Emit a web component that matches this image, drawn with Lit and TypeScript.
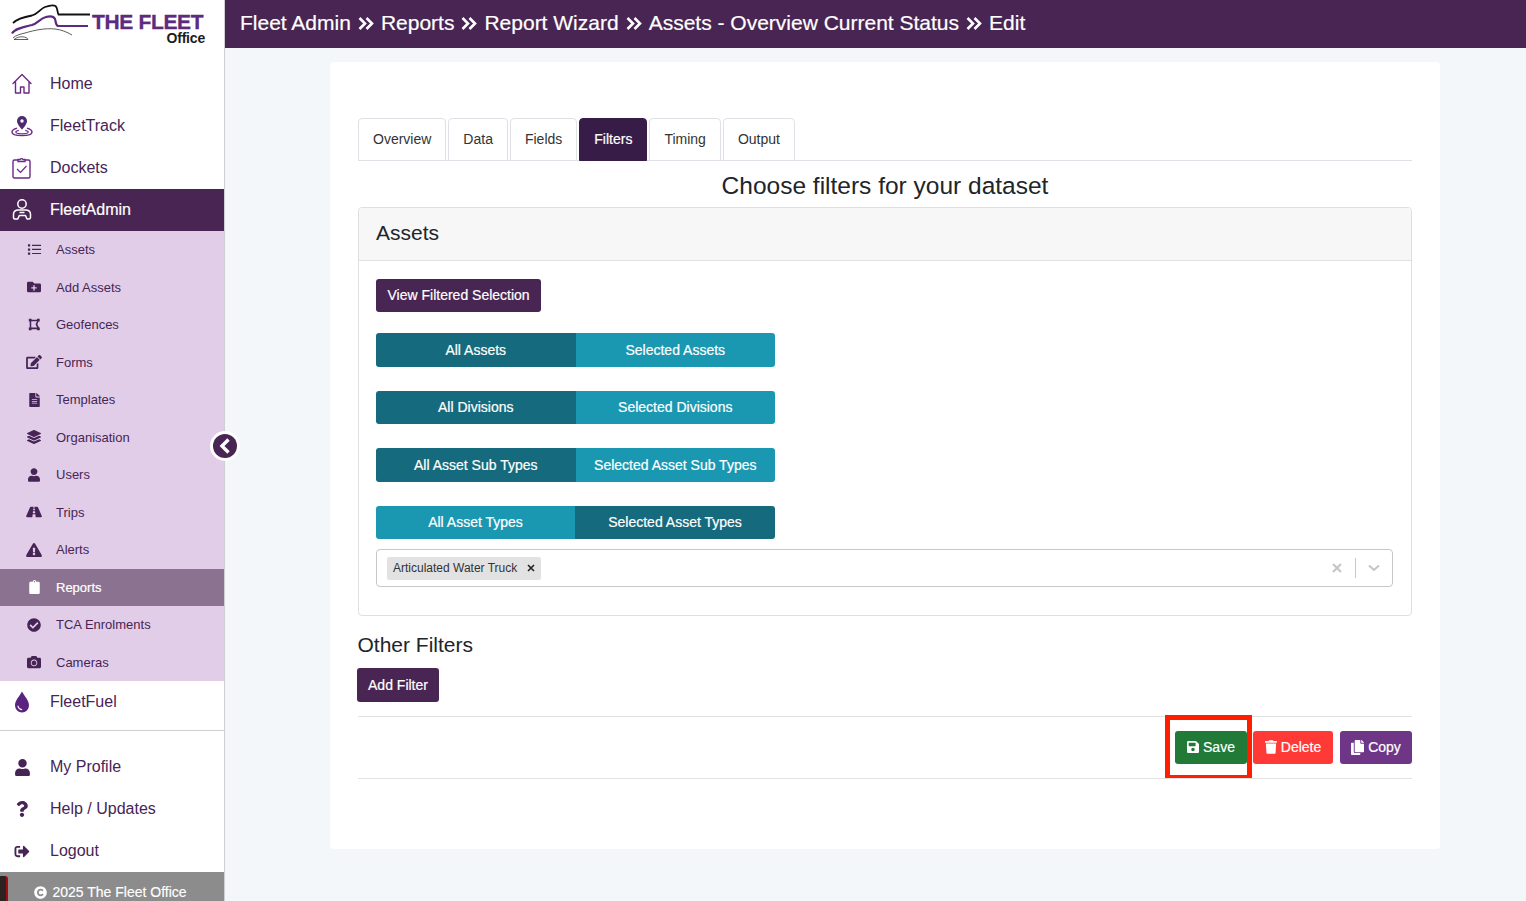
import { LitElement, html, css, svg } from "lit";
import { customElement } from "lit/decorators.js";

type Ic = { vb: string; d: string };
const I: Record<string, Ic> = {
  user: { vb: "0 0 448 512", d: "M224 256c70.7 0 128-57.3 128-128S294.7 0 224 0 96 57.3 96 128s57.3 128 128 128zm89.6 32h-16.7c-22.2 10.2-46.9 16-72.9 16s-50.6-5.8-72.9-16h-16.7C60.2 288 0 348.2 0 422.4V464c0 26.5 21.5 48 48 48h352c26.5 0 48-21.5 48-48v-41.6c0-74.2-60.2-134.4-134.4-134.4z" },
  save: { vb: "0 0 448 512", d: "M433.941 129.941l-83.882-83.882A48 48 0 0 0 316.118 32H48C21.49 32 0 53.49 0 80v352c0 26.51 21.49 48 48 48h352c26.51 0 48-21.49 48-48V163.882a48 48 0 0 0-14.059-33.941zM224 416c-35.346 0-64-28.654-64-64 0-35.346 28.654-64 64-64s64 28.654 64 64c0 35.346-28.654 64-64 64zm96-304.52V212c0 6.627-5.373 12-12 12H76c-6.627 0-12-5.373-12-12V108c0-6.627 5.373-12 12-12h228.52c3.183 0 6.235 1.264 8.485 3.515l3.48 3.48A11.996 11.996 0 0 1 320 111.48z" },
  trash: { vb: "0 0 448 512", d: "M432 32H312l-9.4-18.7A24 24 0 0 0 281.1 0H166.8a23.72 23.72 0 0 0-21.4 13.3L136 32H16A16 16 0 0 0 0 48v32a16 16 0 0 0 16 16h416a16 16 0 0 0 16-16V48a16 16 0 0 0-16-16zM53.2 467a48 48 0 0 0 47.9 45h245.8a48 48 0 0 0 47.9-45L416 128H32z" },
  copy: { vb: "0 0 448 512", d: "M320 448v40c0 13.255-10.745 24-24 24H24c-13.255 0-24-10.745-24-24V120c0-13.255 10.745-24 24-24h72v296c0 30.879 25.121 56 56 56h168zm0-344V0H152c-13.255 0-24 10.745-24 24v368c0 13.255 10.745 24 24 24h272c13.255 0 24-10.745 24-24V128H344c-13.2 0-24-10.8-24-24zm120.971-31.029L375.029 7.029A24 24 0 0 0 358.059 0H352v96h96v-6.059a24 24 0 0 0-7.029-16.97z" },
  question: { vb: "0 0 384 512", d: "M202.021 0C122.202 0 70.503 32.703 29.914 91.026c-7.363 10.58-5.093 25.086 5.178 32.874l43.138 32.709c10.373 7.865 25.132 6.026 33.253-4.148 25.049-31.381 43.63-49.449 82.757-49.449 30.764 0 68.816 19.799 68.816 49.631 0 22.552-18.617 34.134-48.993 51.164-35.423 19.86-82.299 44.576-82.299 106.405V320c0 13.255 10.745 24 24 24h72.471c13.255 0 24-10.745 24-24v-5.773c0-42.86 125.268-44.645 125.268-160.627C377.504 66.256 286.902 0 202.021 0zM192 373.459c-38.196 0-69.271 31.075-69.271 69.271 0 38.195 31.075 69.27 69.271 69.27s69.271-31.075 69.271-69.271-31.075-69.27-69.271-69.27z" },
  check: { vb: "0 0 512 512", d: "M504 256c0 136.967-111.033 248-248 248S8 392.967 8 256 119.033 8 256 8s248 111.033 248 248zM227.314 387.314l184-184c6.248-6.248 6.248-16.379 0-22.627l-22.627-22.627c-6.248-6.249-16.379-6.249-22.628 0L216 308.118l-70.059-70.059c-6.248-6.248-16.379-6.248-22.628 0l-22.627 22.627c-6.248 6.248-6.248 16.379 0 22.627l104 104c6.249 6.249 16.379 6.249 22.628.001z" },
  camera: { vb: "0 0 512 512", d: "M512 144v288c0 26.5-21.5 48-48 48H48c-26.5 0-48-21.5-48-48V144c0-26.5 21.5-48 48-48h88l12.3-32.9c7-18.7 24.9-31.1 44.9-31.1h125.5c20 0 37.9 12.4 44.9 31.1L376 96h88c26.5 0 48 21.5 48 48zM376 288c0-66.2-53.8-120-120-120s-120 53.8-120 120 53.8 120 120 120 120-53.8 120-120zm-32 0c0 48.5-39.5 88-88 88s-88-39.5-88-88 39.5-88 88-88 88 39.5 88 88z" },
  clipboard: { vb: "0 0 384 512", d: "M384 112v352c0 26.51-21.49 48-48 48H48c-26.51 0-48-21.49-48-48V112c0-26.51 21.49-48 48-48h80c0-35.29 28.71-64 64-64s64 28.71 64 64h80c26.51 0 48 21.49 48 48zM192 40c-13.255 0-24 10.745-24 24s10.745 24 24 24 24-10.745 24-24-10.745-24-24-24" },
  warn: { vb: "0 0 576 512", d: "M569.517 440.013C587.975 472.007 564.806 512 527.94 512H48.054c-36.937 0-59.999-40.055-41.577-71.987L246.423 24c18.467-32.009 64.72-31.951 83.154 0l239.94 416.013zM288 354c-25.405 0-46 20.595-46 46s20.595 46 46 46 46-20.595 46-46-20.595-46-46-46zm-43.673-165.346l7.418 136c.347 6.364 5.609 11.346 11.982 11.346h48.546c6.373 0 11.635-4.982 11.982-11.346l7.418-136c.375-6.874-5.098-12.654-11.982-12.654h-63.383c-6.884 0-12.356 5.78-11.981 12.654z" },
  layers: { vb: "0 0 512 512", d: "M12.41 148.02l232.94 105.67c6.8 3.09 14.49 3.09 21.29 0l232.94-105.67c16.55-7.51 16.55-32.52 0-40.03L266.65 2.31a25.607 25.607 0 0 0-21.29 0L12.41 107.98c-16.55 7.51-16.55 32.53 0 40.04zm487.18 88.28l-58.09-26.33-161.64 73.27c-7.56 3.43-15.59 5.17-23.86 5.17s-16.29-1.74-23.86-5.17L70.51 209.97l-58.1 26.33c-16.55 7.5-16.55 32.5 0 40l232.94 105.59c6.8 3.08 14.49 3.08 21.29 0L499.59 276.3c16.55-7.5 16.55-32.5 0-40zm0 127.8l-57.87-26.23-161.86 73.37c-7.56 3.43-15.59 5.17-23.86 5.17s-16.29-1.74-23.86-5.17L70.29 337.87 12.41 364.1c-16.55 7.5-16.55 32.5 0 40l232.94 105.59c6.8 3.08 14.49 3.08 21.29 0L499.59 404.1c16.55-7.5 16.55-32.5 0-40z" },
  edit: { vb: "0 0 576 512", d: "M402.6 83.2l90.2 90.2c3.8 3.8 3.8 10 0 13.8L274.4 405.6l-92.8 10.3c-12.4 1.4-22.9-9.1-21.5-21.5l10.3-92.8L388.8 83.2c3.8-3.8 10-3.8 13.8 0zm162-22.9l-48.8-48.8c-15.2-15.2-39.9-15.2-55.2 0l-35.4 35.4c-3.8 3.8-3.8 10 0 13.8l90.2 90.2c3.8 3.8 10 3.8 13.8 0l35.4-35.4c15.2-15.3 15.2-40 0-55.2zM384 346.2V448H64V128h229.8c3.2 0 6.2-1.3 8.5-3.5l40-40c7.6-7.6 2.2-20.5-8.5-20.5H48C21.5 64 0 85.5 0 112v352c0 26.5 21.5 48 48 48h352c26.5 0 48-21.5 48-48V306.2c0-10.7-12.9-16-20.5-8.5l-40 40c-2.2 2.3-3.5 5.3-3.5 8.5z" },
  file: { vb: "0 0 384 512", d: "M224 136V0H24C10.7 0 0 10.7 0 24v464c0 13.3 10.7 24 24 24h336c13.3 0 24-10.7 24-24V160H248c-13.2 0-24-10.8-24-24zm64 236c0 6.6-5.4 12-12 12H108c-6.6 0-12-5.4-12-12v-8c0-6.6 5.4-12 12-12h168c6.6 0 12 5.4 12 12v8zm0-64c0 6.6-5.4 12-12 12H108c-6.6 0-12-5.4-12-12v-8c0-6.6 5.4-12 12-12h168c6.6 0 12 5.4 12 12v8zm0-72v8c0 6.6-5.4 12-12 12H108c-6.6 0-12-5.4-12-12v-8c0-6.6 5.4-12 12-12h168c6.6 0 12 5.4 12 12zm96-114.1v6.1H256V0h6.1c6.4 0 12.5 2.5 17 7l97.9 98c4.5 4.5 7 10.6 7 16.9z" },
  road: { vb: "0 0 576 512", d: "M573.19 402.67l-139.79-320C428.43 71.29 417.6 64 405.68 64h-97.59l2.45 23.16c.5 4.72-3.21 8.84-7.96 8.84h-29.16c-4.75 0-8.46-4.12-7.96-8.84L267.91 64h-97.59c-11.93 0-22.76 7.29-27.73 18.67L2.8 402.67C-6.45 423.86 8.31 448 30.54 448h196.84l10.31-97.68c.86-8.14 7.72-14.32 15.91-14.32h68.8c8.19 0 15.05 6.18 15.91 14.32L348.62 448h196.84c22.23 0 36.99-24.14 27.73-45.33zM260.4 135.16a8 8 0 0 1 7.96-7.16h39.29c4.09 0 7.53 3.09 7.96 7.16l4.6 43.58c.75 7.09-4.81 13.26-11.93 13.26h-40.54c-7.13 0-12.68-6.17-11.93-13.26l4.6-43.58zM315.64 304h-55.29c-9.5 0-16.91-8.23-15.91-17.68l5.07-48c.86-8.14 7.72-14.32 15.91-14.32h45.15c8.19 0 15.05 6.18 15.91 14.32l5.07 48c1 9.45-6.41 17.68-15.91 17.68z" },
  folder: { vb: "0 0 512 512", d: "M464,128H272L208,64H48A48,48,0,0,0,0,112V400a48,48,0,0,0,48,48H464a48,48,0,0,0,48-48V176A48,48,0,0,0,464,128ZM359.5,296a16,16,0,0,1-16,16h-64v64a16,16,0,0,1-16,16h-16a16,16,0,0,1-16-16V312h-64a16,16,0,0,1-16-16V280a16,16,0,0,1,16-16h64V200a16,16,0,0,1,16-16h16a16,16,0,0,1,16,16v64h64a16,16,0,0,1,16,16Z" },
  logout: { vb: "0 0 512 512", d: "M497 273L329 441c-15 15-41 4.5-41-17v-96H152c-13.3 0-24-10.7-24-24v-96c0-13.3 10.7-24 24-24h136V88c0-21.4 25.9-32 41-17l168 168c9.3 9.4 9.3 24.6 0 34zM192 436v-40c0-6.6-5.4-12-12-12H96c-17.7 0-32-14.3-32-32V160c0-17.7 14.3-32 32-32h84c6.6 0 12-5.4 12-12V76c0-6.6-5.4-12-12-12H96c-53 0-96 43-96 96v192c0 53 43 96 96 96h84c6.6 0 12-5.4 12-12z" },
  copyright: { vb: "0 0 512 512", d: "M256 8C119.033 8 8 119.033 8 256s111.033 248 248 248 248-111.033 248-248S392.967 8 256 8zm117.134 346.753c-1.592 1.867-39.776 45.731-109.851 45.731-84.692 0-144.484-63.26-144.484-145.567 0-81.303 62.004-143.401 143.762-143.401 66.957 0 101.965 37.315 103.422 38.904a12 12 0 0 1 1.238 14.623l-22.383 34.655c-4.049 6.267-12.774 7.351-18.234 2.295-.233-.214-26.529-23.88-61.88-23.88-46.116 0-73.916 33.575-73.916 76.082 0 39.602 25.514 79.692 74.277 79.692 38.697 0 65.28-28.338 65.544-28.625 5.132-5.565 14.059-5.033 18.508 1.053l24.547 33.572a12.001 12.001 0 0 1-.55 14.866z" },
  list: { vb: "0 0 16 16", d: "M1 2.500h2.400v2.400H1zM1 6.800h2.400v2.400H1zM1 11.100h2.400v2.400H1zM5.400 3h9.600v1.300H5.400zM5.400 7.300h9.600v1.300H5.400zM5.400 11.600h9.600v1.300H5.400z" },
  poly: { vb: "0 0 16 16", d: "M1 1h3.400v1H11V1h3.400v3.400H13L11.500 7.600l2 4h1V15H11v-1.200H4.400V15H1v-3.400h1.100V4.400H1zM4 4.400v7.200h7.200L9.200 7.600l2-3.600H4.400z" },
};

const ic = (n: string, w: number, h: number, c = "") =>
  html`<svg class=${c} width=${w} height=${h} viewBox=${I[n].vb} fill="currentColor"><path d=${I[n].d}></path></svg>`;

const outline: Record<string, unknown> = {
  home: svg`<path d="M2 11.500 11 2.500l9 9M4.500 9.500V21h5v-6h3.500v6h5V9.500" fill="none" stroke="#6b2a88" stroke-width="1.400" stroke-linejoin="round" stroke-linecap="round"/>`,
  track: svg`<path d="M11 2a5 5 0 0 0-5 5c0 3.600 5 8.600 5 8.600s5-5 5-8.600a5 5 0 0 0-5-5z" fill="#4f2a70"/><circle cx="11" cy="7" r="1.700" fill="#fff"/><path d="M6 14.200C3.200 15 1 16.200 1 18c0 2.200 4.500 3.600 10 3.600S21 20.200 21 18c0-1.800-2.200-3-5-3.800" fill="none" stroke="#6b2a88" stroke-width="1.400"/><path d="M7.800 16.400c-1.800.4-3 1-3 1.700 0 1 2.800 1.800 6.200 1.800s6.200-.8 6.200-1.800c0-.7-1.200-1.300-3-1.700" fill="none" stroke="#6b2a88" stroke-width="1.200"/>`,
  dockets: svg`<path d="M7 4H3.500A1.500 1.500 0 0 0 2 5.500v15A1.500 1.500 0 0 0 3.500 22h14a1.500 1.500 0 0 0 1.500-1.500v-15A1.500 1.500 0 0 0 17.500 4H14" fill="none" stroke="#6b2a88" stroke-width="1.400"/><path d="M7 5.500V3.500h2.200a1.500 1.500 0 0 1 2.800 0H14v2z" fill="none" stroke="#6b2a88" stroke-width="1.300"/><path d="m6 13 3.500 3.500L15.500 10" fill="none" stroke="#6b2a88" stroke-width="1.200"/>`,
  admin: svg`<circle cx="11" cy="6" r="4.200" fill="none" stroke="#fff" stroke-width="1.500"/><path d="M2.500 19.500v-3c0-3 2.300-4.500 5-4.500h7c2.700 0 5 1.500 5 4.500v3c0 1-.8 1.500-1.700 1.500h-1.800l-1.500-3.500h-6.200L6.800 21H4.200c-.9 0-1.700-.5-1.700-1.500z" fill="none" stroke="#fff" stroke-width="1.500" stroke-linejoin="round"/><path d="M8.500 14.500h5" stroke="#fff" stroke-width="1.500"/>`,
  fuel: svg`<path d="M11 1.500C8.500 6.500 4 10 4 15.500a7 7 0 0 0 14 0C18 10 13.500 6.500 11 1.500z" fill="#5b2380"/><path d="M7 16a4.200 4.200 0 0 0 3.700 3.600" fill="none" stroke="#fff" stroke-width="1.100" stroke-linecap="round"/>`,
};

type NavItem = { t: string; o?: string; i?: string; w?: number; h?: number; cls?: string };
const topNav: NavItem[] = [
  { t: "Home", o: "home" },
  { t: "FleetTrack", o: "track" },
  { t: "Dockets", o: "dockets" },
  { t: "FleetAdmin", o: "admin", cls: "active" },
];
const sub: NavItem[] = [
  { t: "Assets", i: "list", w: 15, h: 15 },
  { t: "Add Assets", i: "folder", w: 14, h: 14 },
  { t: "Geofences", i: "poly", w: 13, h: 13 },
  { t: "Forms", i: "edit", w: 16, h: 14 },
  { t: "Templates", i: "file", w: 11, h: 14 },
  { t: "Organisation", i: "layers", w: 14, h: 14 },
  { t: "Users", i: "user", w: 12, h: 14 },
  { t: "Trips", i: "road", w: 16, h: 14 },
  { t: "Alerts", i: "warn", w: 16, h: 14 },
  { t: "Reports", i: "clipboard", w: 11, h: 14, cls: "cur" },
  { t: "TCA Enrolments", i: "check", w: 14, h: 14 },
  { t: "Cameras", i: "camera", w: 14, h: 14 },
];
const lower: NavItem[] = [
  { t: "My Profile", i: "user", w: 15, h: 17 },
  { t: "Help / Updates", i: "question", w: 12, h: 16 },
  { t: "Logout", i: "logout", w: 16, h: 15 },
];
const crumbs = ["Fleet Admin", "Reports", "Report Wizard", "Assets - Overview Current Status", "Edit"];
const tabs = ["Overview", "Data", "Fields", "Filters", "Timing", "Output"];
const toggles: [string, string, boolean][] = [
  ["All Assets", "Selected Assets", true],
  ["All Divisions", "Selected Divisions", true],
  ["All Asset Sub Types", "Selected Asset Sub Types", true],
  ["All Asset Types", "Selected Asset Types", false],
];

@customElement("app-root")
export class AppRoot extends LitElement {
  static styles = css`
    :host { display: block; height: 100vh; min-height: 901px; overflow: hidden; background: #f4f7fa;
      font-family: "Liberation Sans", Arial, sans-serif; color: #212529; }
    * { box-sizing: border-box; }
    .app { display: flex; height: 901px; }
    .side { width: 225px; flex: none; background: #fff; border-right: 1px solid #cfcfcf; display: flex; flex-direction: column; position: relative; }
    .logo { height: 63px; flex: none; position: relative; }
    .logo svg { display: block; }
    .lt { position: absolute; left: 92px; top: 13px; font-size: 21px; font-weight: 700; color: #5c2a7e; letter-spacing: -0.35px; line-height: 18px; white-space: nowrap; -webkit-text-stroke: 0.3px #5c2a7e; }
    .lo { position: absolute; left: 166.500px; top: 31px; font-size: 14px; font-weight: 700; color: #1c1c1c; line-height: 14px; letter-spacing: -0.2px; }
    .nav { display: flex; align-items: center; height: 42px; color: #462556; font-size: 16px; }
    .nav .ico { width: 50px; flex: none; display: flex; justify-content: center; padding-right: 6px; }
    .nav.active { background: #482553; color: #fff; -webkit-text-stroke: 0.2px #fff; }
    .subs { background: #e1cde8; }
    .sn { display: flex; align-items: center; height: 37.5px; color: #462556; font-size: 13px; }
    .sn .ico { width: 56px; flex: none; display: flex; justify-content: center; padding-left: 12px; }
    .sn.cur { background: #8b7291; color: #fff; -webkit-text-stroke: 0.2px #fff; }
    .divider { border-top: 1px solid #cfcfcf; margin-top: 7px; margin-bottom: 15px; }
    .foot { margin-top: auto; height: 29px; background: #8c8c8c; color: #fff; font-size: 14px; display: flex; align-items: center; justify-content: center; gap: 5px; padding: 11px 3px 0 0; position: relative; -webkit-text-stroke: 0.15px #fff; }
    .foot svg { flex: none; }
    .mark { position: absolute; left: 0; top: 4px; width: 8px; height: 25px; background: #2c2222; border-right: 2px solid #a00d0d; border-top-right-radius: 3px; }
    .collapse { position: absolute; left: 209.500px; top: 431px; width: 30px; height: 30px; border-radius: 50%; background: #fff; display: flex; align-items: center; justify-content: center; z-index: 2; }
    .collapse span { width: 24px; height: 24px; border-radius: 50%; background: #482553; display: flex; align-items: center; justify-content: center; }
    .right { flex: 1; min-width: 0; display: flex; flex-direction: column; }
    .top { height: 48px; background: #482553; color: #fff; display: flex; align-items: center; padding: 0 0 2px 15px; font-size: 21px; white-space: nowrap; gap: 7px; -webkit-text-stroke: 0.2px #fff; }
    .card { width: 1110px; height: 787px; margin: 14px 0 0 105px; background: #fff; border-radius: 4px; padding: 56px 28px 0; }
    .tabs { display: flex; gap: 2px; height: 43px; border-bottom: 1px solid #dee2e6; }
    .tab { height: 43px; padding: 0 14px 2px; display: flex; align-items: center; font-size: 14px; color: #333; background: #fff; border: 1px solid #dee2e6; border-radius: 4px 4px 0 0; }
    .tab.on { background: #381c48; border-color: #381c48; color: #fff; -webkit-text-stroke: 0.2px #fff; }
    h2 { margin: 0; height: 46px; display: flex; align-items: center; justify-content: center; font-size: 24.5px; font-weight: 400; color: #212529; padding-top: 4px; }
    .panel { border: 1px solid #dfdfdf; border-radius: 4px; height: 409px; }
    .phead { height: 53px; background: #f7f7f7; border-bottom: 1px solid #dfdfdf; display: flex; align-items: center; padding: 0 0 2px 17px; font-size: 21px; border-radius: 4px 4px 0 0; }
    .pbody { padding: 18px 18px 0 17px; }
    .btn { display: inline-flex; align-items: center; justify-content: center; gap: 4px; height: 33.5px; padding: 0 11.5px; border-radius: 3px; background: #482553; color: #fff; font-size: 14px; white-space: nowrap; -webkit-text-stroke: 0.2px #fff; }
    .view { display: flex; margin-bottom: 21px; }
    .view .btn { height: 33px; padding-bottom: 1px; }
    .group { display: flex; width: 399px; height: 33.5px; margin-bottom: 24px; border-radius: 3px; overflow: hidden; font-size: 14px; color: #fff; -webkit-text-stroke: 0.2px #fff; }
    .group.last { margin-bottom: 10px; }
    .group div { flex: 1; display: flex; align-items: center; justify-content: center; white-space: nowrap; }
    .group.last div:first-child { flex: 0 0 199px; }
    .dark { background: #156b7d; }
    .light { background: #1a98b1; }
    .select { width: 1017px; height: 38px; border: 1px solid #c8c8c8; border-radius: 4px; display: flex; align-items: center; padding-left: 10px; }
    .chip { display: flex; align-items: center; height: 23px; background: #e2e2e2; border-radius: 2px; font-size: 12px; color: #333; padding: 0 6px; width: 154px; justify-content: space-between; }
    .tools { margin-left: auto; display: flex; align-items: center; padding-right: 12px; }
    .sep { width: 1px; height: 20px; background: #c8c8c8; margin: 0 12px 0 13px; }
    h3 { margin: 0; height: 52px; display: flex; align-items: center; font-size: 21px; font-weight: 400; color: #212529; padding-top: 6px; margin-left: -0.5px; }
    .add { margin-left: -1px; display: flex; width: 82px; margin-bottom: 14px; padding: 0; }
    .actions { height: 63px; border-top: 1px solid #e2e2e2; border-bottom: 1px solid #e2e2e2; display: flex; justify-content: flex-end; gap: 6px; padding-top: 14px; }
    .actions .btn { height: 33px; padding: 0; }
    .save { position: relative; width: 72px; background: #217a38; }
    .del { width: 80px; background: #fe3936; }
    .cp { width: 72px; background: #6f3687; margin-left: 1px; }
    .hl { position: absolute; left: -10px; top: -16px; width: 87px; height: 63px; border: solid #ff1e00; border-width: 5px 5px 3px 5px; pointer-events: none; }
  `;

  private outlineIcon(n: string) {
    return html`<svg width="22" height="24" viewBox="0 0 22 24">${outline[n]}</svg>`;
  }

  render() {
    return html`<div class="app">
      <aside class="side">
        <div class="logo">
          <svg width="92" height="44" viewBox="0 0 92 44" fill="none">
            <path d="M13 23C17 19 24 17 32 15.500 38 14 40 9 45 7 49 5.500 53 4.500 55.500 6 58 8 57 12 58.500 14.500H90" stroke="#111" stroke-width="1.800"/>
            <path d="M12 33.500C15 28.500 24 27 32 25 38 23 40 18.500 46 17 50 16 53.500 16 55 19 56 22 55.500 25 58 26H88" stroke="#5c2a7e" stroke-width="2.200"/>
            <path d="M13 38c3-3 8-4 12-5 10-3 20-5 30-4 6 .6 12 3 17 6" stroke="#333" stroke-width=".8"/>
            <path d="M28 39.500c-1-3-9-4-13-.5l-1 .5h14" stroke="#333" stroke-width=".8"/>
          </svg>
          <span class="lt">THE FLEET</span>
          <span class="lo">Office</span>
        </div>
        ${topNav.map((n) => html`<div class="nav ${n.cls ?? ""}"><span class="ico">${this.outlineIcon(n.o!)}</span>${n.t}</div>`)}
        <div class="subs">
          ${sub.map((n) => html`<div class="sn ${n.cls ?? ""}"><span class="ico">${ic(n.i!, n.w!, n.h!)}</span>${n.t}</div>`)}
        </div>
        <div class="nav"><span class="ico">${this.outlineIcon("fuel")}</span>FleetFuel</div>
        <div class="divider"></div>
        ${lower.map((n) => html`<div class="nav"><span class="ico">${ic(n.i!, n.w!, n.h!)}</span>${n.t}</div>`)}
        <div class="foot"><i class="mark"></i>${ic("copyright", 13, 13)}<span>2025 The Fleet Office</span></div>
        <div class="collapse"><span><svg width="14" height="18" viewBox="0 0 14 18"><path d="M10.500 2.500 4 9l6.500 6.500" fill="none" stroke="#fff" stroke-width="3.400"/></svg></span></div>
      </aside>
      <div class="right">
        <header class="top">
          ${crumbs.map((c, i) => html`${i > 0 ? html`<svg width="16" height="13" viewBox="0 0 16 13" fill="none"><path d="M1.500 1 7 6.500 1.500 12M8.500 1 14 6.500 8.500 12" stroke="#fff" stroke-width="2.600"/></svg>` : ""}<span>${c}</span>`)}
        </header>
        <main class="card">
          <div class="tabs">${tabs.map((t) => html`<div class="tab ${t === "Filters" ? "on" : ""}">${t}</div>`)}</div>
          <h2>Choose filters for your dataset</h2>
          <section class="panel">
            <div class="phead">Assets</div>
            <div class="pbody">
              <div class="view"><span class="btn">View Filtered Selection</span></div>
              ${toggles.map(([a, b, firstOn], i) => html`<div class="group ${i === 3 ? "last" : ""}">
                <div class=${firstOn ? "dark" : "light"}>${a}</div>
                <div class=${firstOn ? "light" : "dark"}>${b}</div>
              </div>`)}
              <div class="select">
                <span class="chip">Articulated Water Truck
                  <svg width="8" height="8" viewBox="0 0 8 8"><path d="M1 1l6 6M7 1 1 7" stroke="#222" stroke-width="1.600"/></svg>
                </span>
                <span class="tools">
                  <svg width="10" height="10" viewBox="0 0 10 10"><path d="M1 1l8 8M9 1 1 9" stroke="#c4c4c4" stroke-width="2"/></svg>
                  <i class="sep"></i>
                  <svg width="12" height="8" viewBox="0 0 12 8"><path d="M1 1.500 6 6l5-4.500" fill="none" stroke="#c4c4c4" stroke-width="2"/></svg>
                </span>
              </div>
            </div>
          </section>
          <h3>Other Filters</h3>
          <span class="btn add">Add Filter</span>
          <div class="actions">
            <span class="btn save">${ic("save", 12, 14)}Save<i class="hl"></i></span>
            <span class="btn del">${ic("trash", 12, 14)}Delete</span>
            <span class="btn cp">${ic("copy", 13, 15)}Copy</span>
          </div>
        </main>
      </div>
    </div>`;
  }
}
